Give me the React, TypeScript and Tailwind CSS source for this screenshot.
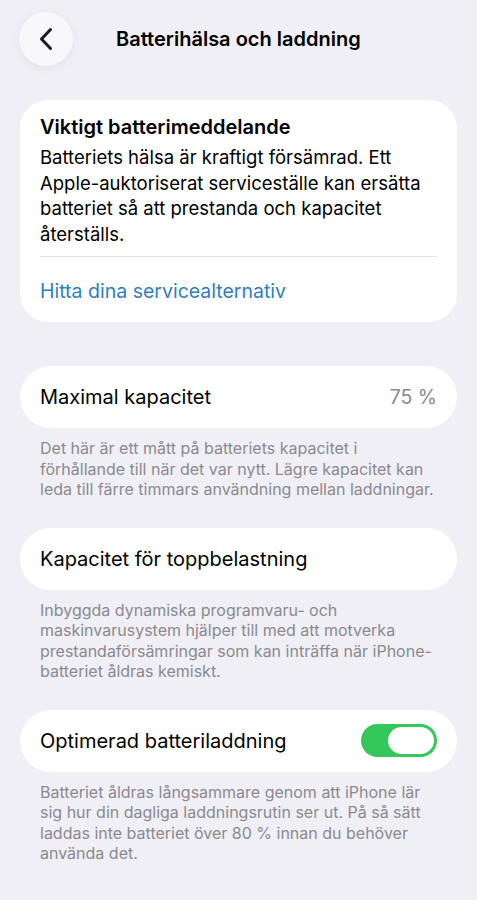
import React from 'react';

const font = { fontFamily: 'Inter, "Noto Sans", sans-serif' };

interface RowProps {
  label: string;
  right?: React.ReactNode;
}

const Row = ({ label, right }: RowProps) => (
  <div className="mx-5 h-[62px] bg-white rounded-full flex items-center justify-between pl-5 pr-5">
    <span className="text-[20px] text-black">{label}</span>
    {right}
  </div>
);

const Footer = ({ children }: { children: React.ReactNode }) => (
  <p className="mx-5 pl-5 pr-4 pt-[10px] text-[16px] leading-[20.5px] text-[#8a8a8f]">{children}</p>
);

const Toggle = () => (
  <div className="w-[76px] h-[33px] rounded-full bg-[#34c759] p-[3px] flex justify-end">
    <div className="w-[46px] h-[27px] rounded-full bg-white" />
  </div>
);

export default function App() {
  return (
    <div className="min-h-[900px] w-full bg-[#f0eff5] pb-10" style={font}>
      <header className="flex items-center h-[78px] pl-[19px]">
        <div className="w-[54px] h-[54px] rounded-full bg-[#f8f8fb] shadow-[0_2px_10px_rgba(0,0,0,0.06)] flex items-center justify-center">
          <svg width="14" height="24" viewBox="0 0 14 24" fill="none">
            <path d="M11.5 2.5L2.5 12l9 9.5" stroke="#1c1c1e" strokeWidth="3" strokeLinecap="round" strokeLinejoin="round" />
          </svg>
        </div>
        <h1 className="ml-[43px] text-[20px] font-semibold text-black">Batterihälsa och laddning</h1>
      </header>

      <section className="mx-5 mt-[22px] bg-white rounded-[28px] px-5 pt-[14px] pb-[16px]">
        <h2 className="text-[20px] font-semibold text-black leading-[26px]">Viktigt batterimeddelande</h2>
        <p className="mt-[5px] text-[18.5px] leading-[25.5px] text-black">
          Batteriets hälsa är kraftigt försämrad. Ett Apple-auktoriserat serviceställe kan ersätta batteriet så att prestanda och kapacitet återställs.
        </p>
        <div className="mt-[9px] h-px bg-[#e2e2e6]" />
        <p className="mt-[20px] text-[19.5px] text-[#2f7fc1]">Hitta dina servicealternativ</p>
      </section>

      <div className="mt-[44px]">
        <Row label="Maximal kapacitet" right={<span className="text-[19.5px] text-[#8a8a8f]">75 %</span>} />
        <Footer>
          Det här är ett mått på batteriets kapacitet i förhållande till när det var nytt. Lägre kapacitet kan leda till färre timmars användning mellan laddningar.
        </Footer>
      </div>

      <div className="mt-[28px]">
        <Row label="Kapacitet för toppbelastning" />
        <Footer>
          Inbyggda dynamiska programvaru- och maskinvarusystem hjälper till med att motverka prestandaförsämringar som kan inträffa när iPhone-batteriet åldras kemiskt.
        </Footer>
      </div>

      <div className="mt-[28px]">
        <Row label="Optimerad batteriladdning" right={<Toggle />} />
        <Footer>
          Batteriet åldras långsammare genom att iPhone lär sig hur din dagliga laddningsrutin ser ut. På så sätt laddas inte batteriet över 80 % innan du behöver använda det.
        </Footer>
      </div>
    </div>
  );
}
